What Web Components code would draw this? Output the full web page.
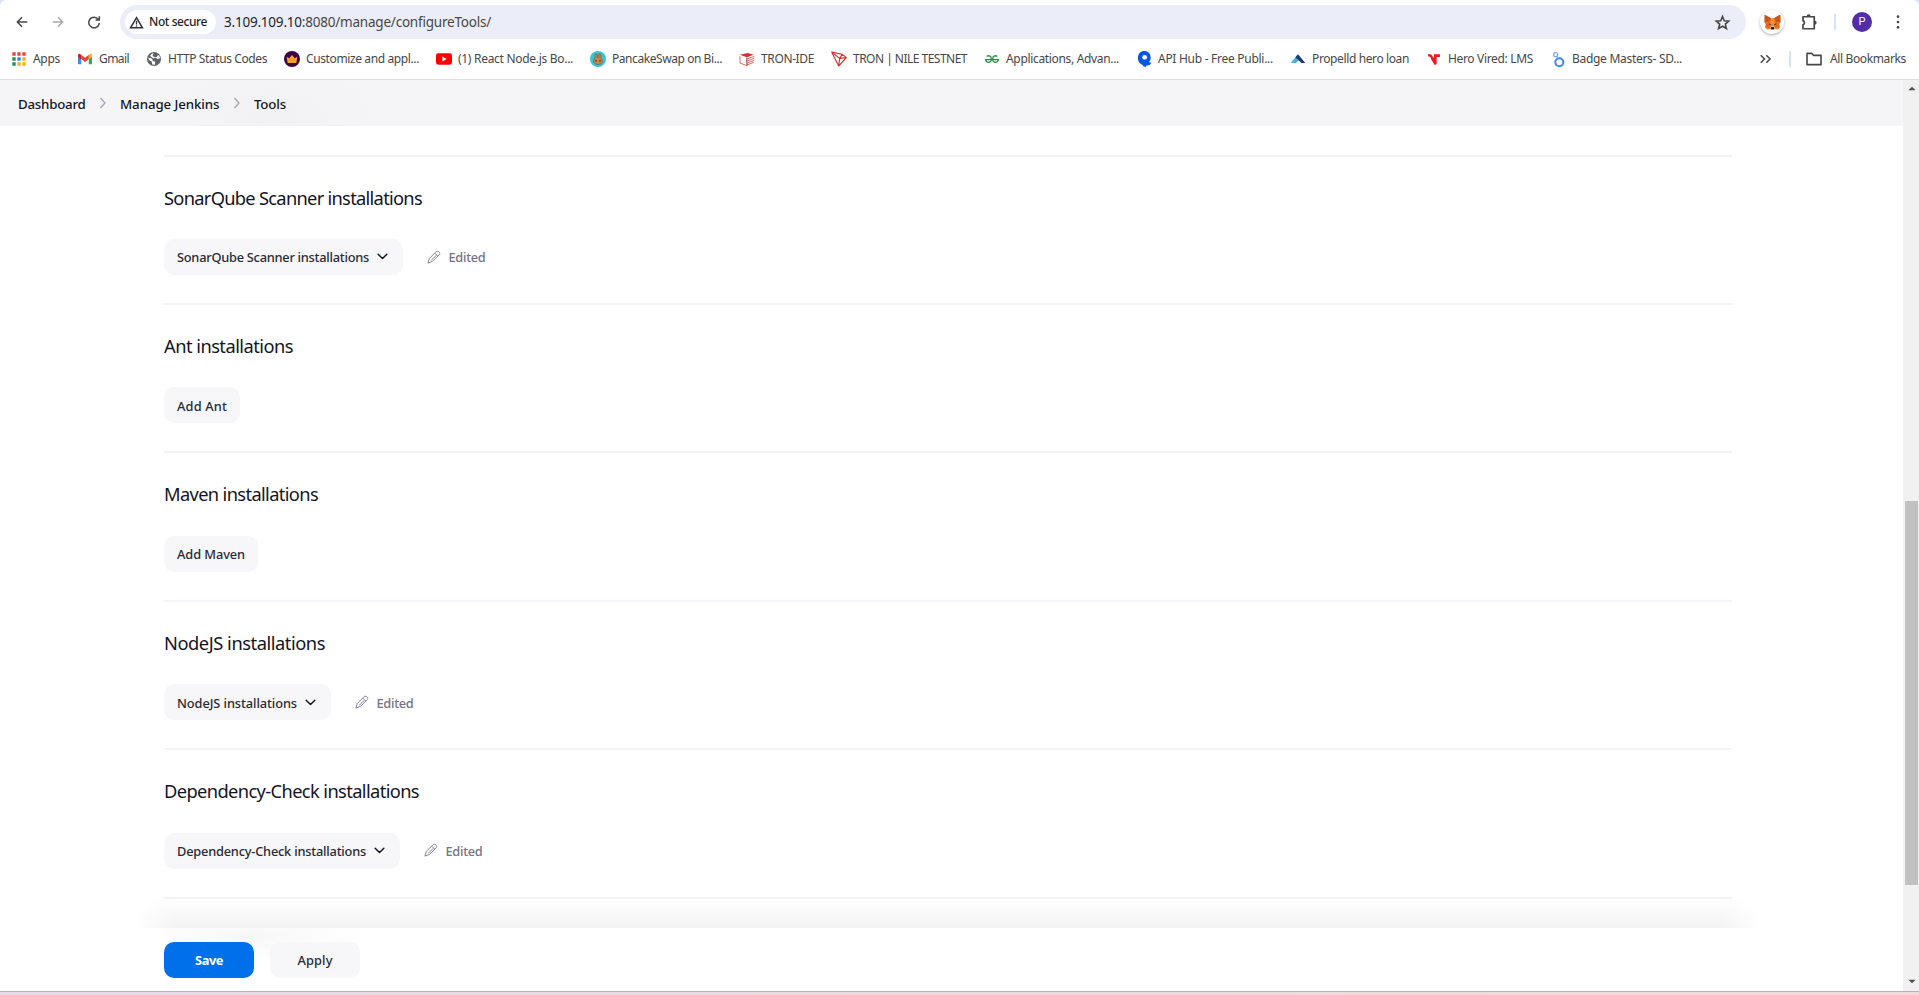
<!DOCTYPE html>
<html lang="en">
<head>
<meta charset="utf-8">
<title>Tools [Jenkins]</title>
<style>
html,body{margin:0;height:100%;overflow:hidden;background:#fff;font-family:"Noto Sans","Open Sans",sans-serif}
</style>
</head>
<body>
<browser-window></browser-window>
<script>
const define = (name, html, setup) => {
  const template = document.createElement('template');
  template.innerHTML = html;
  customElements.define(name, class extends HTMLElement {
    connectedCallback() {
      if (this.shadowRoot) return;
      this.attachShadow({mode: 'open'}).appendChild(template.content.cloneNode(true));
      if (setup) setup(this, this.shadowRoot);
    }
  });
};

const icons = {
  back: '<path d="M20 12H5M12 5l-7 7 7 7" fill="none" stroke="#474747" stroke-width="2.2"/>',
  forward: '<path d="M4 12h15M12 5l7 7-7 7" fill="none" stroke="#a9a9a9" stroke-width="2.2"/>',
  reload: '<path d="M18.5 8A8 8 0 1 0 20 13.5M20 3.5V9h-5.600" fill="none" stroke="#474747" stroke-width="2.3"/>',
  warn: '<path d="M12 4.200L21.500 20.500H2.500Z" fill="none" stroke="#303134" stroke-width="2.400"/><path d="M12 9v6M12 16.400v2" stroke="#303134" stroke-width="2"/>',
  star: '<path d="M12 3.600l2.500 5.900 6.300.6-4.800 4.200 1.500 6.200-5.500-3.300-5.500 3.300 1.500-6.200-4.800-4.200 6.300-.6z" fill="none" stroke="#474747" stroke-width="2.300"/>',
  puzzle: '<path d="M4 5h15v16H4v-5.200a3 3 0 0 0 0-5.600Z" fill="none" stroke="#474747" stroke-width="2.300" stroke-linejoin="round"/><path d="M8.800 4.500a2.700 2.700 0 0 1 5.400 0M19.500 10.200a2.700 2.700 0 0 1 0 5.400z" fill="#474747"/>',
  dots: '<g fill="#474747"><circle cx="12" cy="4" r="2"/><circle cx="12" cy="12" r="2"/><circle cx="12" cy="20" r="2"/></g>',
  fox: '<path d="M1 1l9 5h4l9-5 .5 10-2 4 1 4-3 3-5-1-1 1.500h-3l-1-1.500-5 1-3-3 1-4-2-4z" fill="#f07b22"/><path d="M1 1l9 5-3 5-6 1zM23 1l-9 5 3 5 6 1z" fill="#c7561b"/><path d="M3 14l4-3 3 5-2 3-6-1zM21 14l-4-3-3 5 2 3 6-1z" fill="#e5661b"/><path d="M10 7h4l1 9h-6z" fill="#ff8d32"/><path d="M6.500 13l4 2-2.500.600zM17.500 13l-4 2 2.500.600z" fill="#303846"/><path d="M9 18l3-1 3 1v3l-1 1h-4l-1-1z" fill="#dfcec3"/><path d="M10 18.500h4l.5 3h-5z" fill="#222"/>',
  apps: '<path fill="#ea4335" d="M2 2h5v5H2zM9.500 2h5v5h-5zM17 2h5v5h-5z"/><path fill="#1e9254" d="M2 9.500h5v5H2zM2 17h5v5H2z"/><path fill="#1a84f0" d="M9.500 9.500h5v5h-5z"/><path fill="#f9b20d" d="M17 9.500h5v5h-5zM9.500 17h5v5h-5zM17 17h5v5h-5z"/>',
  gmail: '<path fill="#4285f4" d="M1.500 9v9.500c0 1 .8 1.500 1.500 1.500h3.300V10.500z"/><path fill="#34a853" d="M17.700 20H21c1 0 1.500-.8 1.500-1.500V8l-4.800 3z"/><path fill="#fbbc04" d="M17.700 6v6.500l4.800-3.500V6.500c0-2.500-2-3-3.500-2z"/><path fill="#ea4335" d="M6.300 12V5.500L12 10l5.700-4.500V12L12 16.500z"/><path fill="#c5221f" d="M1.500 6.500V9l4.800 3.500V6L5 4.700c-1.500-1.200-3.500-.2-3.500 1.800z"/>',
  globe: '<circle cx="12" cy="12" r="10.500" fill="#5f6368"/><path d="M3 10l5 1 2 2v2l4 1-1 5-4-1v-4l-4-2zM11 3l-1 4 2 2h4l2-3 2 1 1 4-4 1-2-2-4 1-3-2-2-2 3-3z" fill="#fff"/>',
  crown: '<circle cx="12" cy="12" r="12" fill="#3d0640"/><path d="M4 8.500l3.800 2.500L12 6l4.200 5 3.800-2.500L18.500 18h-13z" fill="#f5a030"/>',
  youtube: '<rect y="3.500" width="24" height="17" rx="3.500" fill="#f00"/><path d="M9.600 8.200v7.600l6.300-3.800z" fill="#fff"/>',
  bunny: '<circle cx="12" cy="12" r="12" fill="#36c5d4"/><path d="M7.500 11V6a1.700 1.700 0 0 1 3.400 0v4h2.200V6a1.700 1.700 0 0 1 3.400 0v5c3 2 3 7-1 8.500-2 .8-5 .8-7 0-4-1.500-4-6.500-1-8.500z" fill="#c98a4a" stroke="#805030"/><path d="M9 13v3M15 13v3" stroke="#5b3020" stroke-width="1.800"/>',
  cube: '<path d="M1 5.500L13 3l9 2.500-10 4z" fill="#d4332d"/><path d="M1.500 8v10l10 4V10M12 10v12M12 12l11-4M12 15l11-4M12 18l11-4M12 21l10-4" fill="none" stroke="#d2544c" stroke-width="1.300"/>',
  tron: '<path d="M1 1.500L17 5l6 5-11.500 12.500ZM1 1.500l12 9.500-1.500 11.500M13 11l10-1M13 11l4-6" fill="none" stroke="#d4332d" stroke-width="1.700" stroke-linejoin="round"/>',
  geeks: '<path d="M4 8c4-2 7 0 7 4 0 6-7 7-8.500 1h19c-1.500 6-8.500 5-8.500-1 0-4 3-6 7-4" fill="none" stroke="#308d46" stroke-width="2"/>',
  rapid: '<path d="M3 11C3 3.500 7 0 12.500 0S22 4 22 10c0 3-1 5-2.700 6.800l3.700.7c-1 3-4 4.500-7 4l-1 2.500-4-1-1-2C5 19 3 16 3 11z" fill="#0357e5"/><circle cx="13" cy="9.500" r="3.600" fill="#fff"/>',
  propelld: '<path d="M1 18L11 6l5 4-7 8z" fill="#4caee0"/><path d="M8 9.500L12 5l11 13H17z" fill="#203a75"/>',
  hero: '<path d="M3 5h4.500l4.500 6V5h9v4h-5v11l-3 1L8 13 6.500 9 3 8z" fill="#ec1c24"/>',
  badge: '<circle cx="14" cy="17" r="6" fill="none" stroke="#4285f4" stroke-width="3"/><circle cx="8.500" cy="5.500" r="3" fill="none" stroke="#7ba9f6" stroke-width="2"/><path d="M10 8l2 3" stroke="#7ba9f6" stroke-width="2"/>',
  more: '<path d="M3 5.500l6.500 6.500L3 18.500M12.500 5.500L19 12l-6.500 6.500" fill="none" stroke="#474747" stroke-width="2.600"/>',
  folder: '<path d="M1.500 3.500h7l3 3h11v14h-21z" fill="none" stroke="#474747" stroke-width="2.400" stroke-linejoin="round"/>',
  crumb: '<path d="M7 2l9 10-9 10" fill="none" stroke="#a3a3b8" stroke-width="2.500"/>',
  chevron: '<path d="M2.500 7L12 16.500 21.500 7" fill="none" stroke="#14141f" stroke-width="3.200" stroke-linecap="round" stroke-linejoin="round"/>',
  pencil: '<path d="M1.500 22.500l2.500-8L15.500 3c3-3 8.500 2 5.500 5L9.500 19.500zM13.500 5.500l5 5M16 9L7 18" fill="none" stroke="#85859a" stroke-width="1.700" stroke-linejoin="round"/>',
  up: '<path d="M1 16L12 5l11 11z" fill="#505050"/>',
  down: '<path d="M1 8l11 11L23 8z" fill="#505050"/>'
};

define('ui-icon', '<style>:host{display:block;flex:none}svg{display:block;width:100%;height:100%;overflow:visible}</style><svg viewBox="0 0 24 24"></svg>', (el, root) => {
  const s = el.getAttribute('size') || 16;
  el.style.width = el.style.height = s + 'px';
  root.querySelector('svg').innerHTML = icons[el.getAttribute('name')];
});

// A single-line label whose tracking is adjusted to fill a given width.
define('fit-text', '<style>:host{display:block;flex:none;white-space:nowrap}span{display:inline-block}</style><span><slot></slot></span>', (el, root) => {
  const span = root.querySelector('span'), w = +el.getAttribute('w');
  el.style.width = w + 'px';
  span.style.letterSpacing = (w - span.getBoundingClientRect().width) / el.textContent.length + 'px';
});

define('address-bar', `<style>
:host{display:flex;box-sizing:border-box;height:44px;padding:5px 0 5px 14px;align-items:center}
.nav{display:flex;gap:20px;width:106px}
.omni{display:flex;align-items:center;box-sizing:border-box;width:1626px;height:34px;border-radius:17px;background:#ebeef8;padding:0 15px 0 5px;font-size:13.500px;color:#474747}
.pill{display:flex;align-items:center;box-sizing:border-box;height:24px;width:91px;border-radius:12px;background:#fff;padding-left:4px;gap:5px;font:500 12px/24px "Noto Sans",sans-serif;color:#1f1f1f;margin-right:8px}
b{font-weight:400;color:#1f1f1f}
.grow{flex:1}
.fox{display:flex;align-items:center;justify-content:center;width:24px;height:24px;border-radius:50%;background:#fff;box-shadow:0 1px 3px #0005;margin:0 16px 0 14px}
i{width:2px;height:16px;background:#d3e3fd;margin:0 16px}
.avatar{width:20px;height:20px;border-radius:50%;background:#512da8;color:#fff;font:400 11px/20px Roboto,sans-serif;text-align:center;margin-right:18px}
</style>
<div class="nav"><ui-icon name="back"></ui-icon><ui-icon name="forward"></ui-icon><ui-icon name="reload"></ui-icon></div>
<div class="omni"><div class="pill"><ui-icon name="warn" size="15"></ui-icon><fit-text w="58">Not secure</fit-text></div>
<fit-text w="267"><b>3.109.109.10</b>:8080/manage/configureTools/</fit-text><div class="grow"></div><ui-icon name="star" size="17"></ui-icon></div>
<div class="fox"><ui-icon name="fox" size="17"></ui-icon></div><ui-icon name="puzzle" size="18"></ui-icon><i></i><div class="avatar">P</div><ui-icon name="dots"></ui-icon>`);

customElements.define('bookmarks-bar', class extends HTMLElement {
  connectedCallback() {
    const items = [['apps','Apps',27],['gmail','Gmail',30],['globe','HTTP Status Codes',99],['crown','Customize and appl...',113],['youtube','(1) React Node.js Bo...',115],['bunny','PancakeSwap on Bi...',110],['cube','TRON-IDE',53],['tron','TRON | NILE TESTNET',114],['geeks','Applications, Advan...',113],['rapid','API Hub - Free Publi...',115],['propelld','Propelld hero loan',97],['hero','Hero Vired: LMS',85],['badge','Badge Masters- SD...',110]];
    this.attachShadow({mode: 'open'}).innerHTML = `<style>
    :host{display:flex;box-sizing:border-box;height:36px;padding:0 0 6px 11px;align-items:center;gap:17px;font-size:12px;line-height:18px;color:#474747;border-bottom:1px solid #dcdee0}
    div{display:flex;align-items:center;gap:6px}
    i{width:2px;height:16px;background:#d3e3fd;margin:0 -1px 0 -1px}
    .more{margin-left:60px}.all{gap:8px;margin-left:-1px}
    </style>` + items.map(([i, t, w]) => `<div><ui-icon name="${i}"></ui-icon><fit-text w="${w}">${t}</fit-text></div>`).join('') +
    '<ui-icon class="more" name="more" size="14"></ui-icon><i></i><div class="all"><ui-icon name="folder"></ui-icon><fit-text w="76">All Bookmarks</fit-text></div>';
  }
});

define('bread-crumbs', `<style>
:host{display:flex;box-sizing:border-box;flex:none;height:46px;padding:1px 18px 0;align-items:center;background:radial-gradient(ellipse 110px 50px at 275px 34px,#f2f2f5,#f5f5f800) no-repeat,#f5f5f8;font-weight:480;font-size:13.300px;line-height:20px;color:#14141f}
ui-icon{margin:0 11px 2px 11.500px}
</style><fit-text w="67.500">Dashboard</fit-text><ui-icon name="crumb" size="12"></ui-icon><fit-text w="99.500">Manage Jenkins</fit-text><ui-icon name="crumb" size="12"></ui-icon><fit-text w="32">Tools</fit-text>`);

define('tool-button', `<style>
:host{display:flex;align-items:center;box-sizing:border-box;height:36px;padding:.8px 13px 0;border-radius:10px;background:#f7f7f9;color:#2a2a35;font-weight:480;font-size:12.800px;line-height:20px;flex:none}
:host([kind=primary]){background:#0070ea;color:#fff;font-weight:700}
:host([kind]){width:90px;justify-content:center;padding:0}
ui-icon{margin:0 2px 1px 8px}
</style><slot></slot>`, (el, root) => {
  if (el.hasAttribute('menu')) {
    const i = document.createElement('ui-icon');
    i.setAttribute('name', 'chevron'); i.setAttribute('size', 11);
    root.appendChild(i);
  }
});

define('tool-section', `<style>
:host{display:block;height:148.400px;box-sizing:border-box;border-top:2px solid #f3f3f8}
h2{margin:0;padding-top:28px;height:54px;box-sizing:border-box;font-weight:440;font-size:18.300px;line-height:26px;color:#14141f}
.row{display:flex;align-items:center;margin-top:28.400px;height:36px}
.edited{display:flex;align-items:center;gap:8px;margin-left:23.500px;padding-top:.8px;color:#737387;font-weight:480;font-size:12.800px;line-height:20px}
ui-icon{margin-bottom:1px}
</style><h2><slot name="title"></slot></h2><div class="row"><slot></slot></div>`, (el, root) => {
  if (el.hasAttribute('edited')) {
    const d = document.createElement('div');
    d.className = 'edited';
    d.innerHTML = '<ui-icon name="pencil" size="14"></ui-icon><fit-text w="37">Edited</fit-text>';
    root.querySelector('.row').appendChild(d);
  }
});

define('action-bar', `<style>
:host{display:block;position:relative;width:1568px;height:63px;flex:none}
.shade{position:absolute;left:-40px;right:-40px;bottom:63px;height:40px;overflow:hidden}
.shade::after{content:"";position:absolute;left:40px;right:40px;top:40px;height:60px;box-shadow:0 0 30px 10px #00000012}
.bar{display:flex;gap:16px;padding:14px 0 0;height:49px;background:radial-gradient(ellipse 110px 28px at 90px 8px,#f7f7f8,#fff0) no-repeat}
</style><div class="shade"></div><div class="bar"><slot></slot></div>`);

define('scroll-bar', `<style>
:host{display:flex;flex-direction:column;box-sizing:border-box;width:16px;flex:none;background:#f1f1f1;align-items:center;padding:5px 0 6px 1px}
.thumb{width:13px;height:384px;background:#c1c1c1;margin-top:408px}
.gap{flex:1}
</style><ui-icon name="up" size="8"></ui-icon><div class="thumb"></div><div class="gap"></div><ui-icon name="down" size="8"></ui-icon>`);

define('browser-window', `<style>
:host{display:flex;flex-direction:column;height:995px;width:1919px;background:#d3e3fd}
header{background:#fff;border-radius:6px 6px 0 0;flex:none}
.view{display:flex;flex:1;min-height:0}
.page{display:flex;flex-direction:column;width:1903px;background:#fff}
main{box-sizing:border-box;width:1732px;padding:28.600px 0 0 164px;flex:1;min-height:0;overflow:hidden}
action-bar{margin-left:164px}
hr{margin:0;border:0;height:2px;background:#f3f3f8}
footer{flex:none;height:3px;border-top:1px solid #b8b0b8;background:linear-gradient(90deg,#e6dbe8,#f0dbd8)}
</style>
<header><address-bar></address-bar><bookmarks-bar></bookmarks-bar></header>
<div class="view"><div class="page"><bread-crumbs></bread-crumbs>
<main>
<tool-section edited><fit-text slot="title" w="258">SonarQube Scanner installations</fit-text><tool-button menu><fit-text w="192">SonarQube Scanner installations</fit-text></tool-button></tool-section>
<tool-section><fit-text slot="title" w="129">Ant installations</fit-text><tool-button><fit-text w="50">Add Ant</fit-text></tool-button></tool-section>
<tool-section><fit-text slot="title" w="154">Maven installations</fit-text><tool-button><fit-text w="68">Add Maven</fit-text></tool-button></tool-section>
<tool-section edited><fit-text slot="title" w="161">NodeJS installations</fit-text><tool-button menu><fit-text w="120">NodeJS installations</fit-text></tool-button></tool-section>
<tool-section edited><fit-text slot="title" w="255">Dependency-Check installations</fit-text><tool-button menu><fit-text w="189">Dependency-Check installations</fit-text></tool-button></tool-section>
<hr>
</main>
<action-bar><tool-button kind="primary"><fit-text w="28">Save</fit-text></tool-button><tool-button kind="plain"><fit-text w="35">Apply</fit-text></tool-button></action-bar>
</div><scroll-bar></scroll-bar></div>
<footer></footer>`);
</script>
</body>
</html>
